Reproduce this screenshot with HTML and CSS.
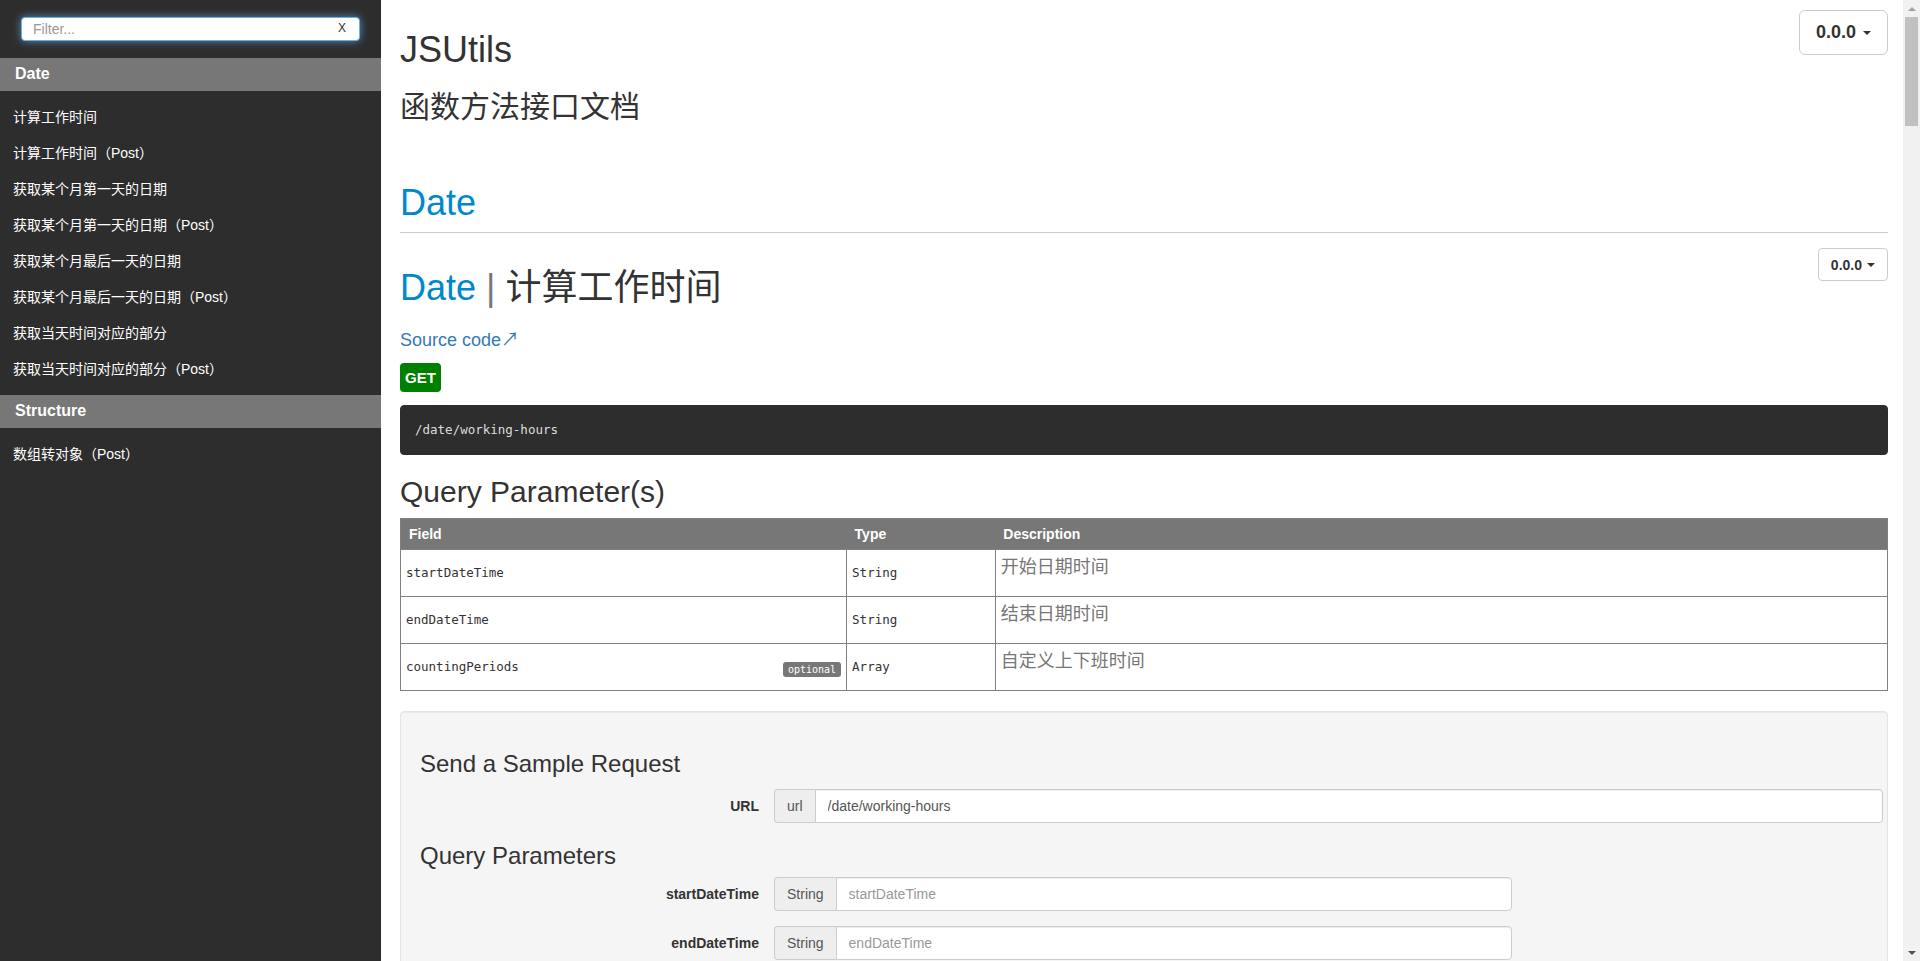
FILE: index.html
```html
<!DOCTYPE html>
<html lang="zh-CN">
<head>
<meta charset="utf-8">
<title>JSUtils</title>
<link rel="stylesheet" href="styles.css">
</head>
<body>
<div class="layout">
  <aside class="sidebar">
    <div class="filter-wrap">
      <div class="filter">
        <input type="text" placeholder="Filter...">
        <span class="filter-x">X</span>
      </div>
    </div>
    <nav>
      <div class="nav-header">Date</div>
      <ul class="nav-list">
        <li>计算工作时间</li>
        <li>计算工作时间（Post）</li>
        <li>获取某个月第一天的日期</li>
        <li>获取某个月第一天的日期（Post）</li>
        <li>获取某个月最后一天的日期</li>
        <li>获取某个月最后一天的日期（Post）</li>
        <li>获取当天时间对应的部分</li>
        <li>获取当天时间对应的部分（Post）</li>
      </ul>
      <div class="nav-header">Structure</div>
      <ul class="nav-list">
        <li>数组转对象（Post）</li>
      </ul>
    </nav>
  </aside>

  <main class="main">
    <div class="page-head">
      <div class="page-titles">
        <h1 class="project-name">JSUtils</h1>
        <h2 class="project-desc">函数方法接口文档</h2>
      </div>
      <button class="version-btn version-big">0.0.0<span class="caret"></span></button>
    </div>

    <section id="api-Date" class="api-section">
      <h1 class="section-title">Date</h1>

      <article class="api-article">
        <div class="article-head">
          <h1 class="api-title"><span class="api-group">Date</span> <span class="api-sep">|</span> <span class="api-name">计算工作时间</span></h1>
          <button class="version-btn version-small">0.0.0<span class="caret caret-small"></span></button>
        </div>
        <a class="source-link">Source code↗</a>
        <div class="method-row"><span class="method method-get">GET</span></div>
        <pre class="endpoint-box"><code class="endpoint">/date/working-hours</code></pre>

        <h2 class="params-title">Query Parameter(s)</h2>
        <table class="params-table">
          <thead>
            <tr><th class="col-field">Field</th><th class="col-type">Type</th><th>Description</th></tr>
          </thead>
          <tbody>
            <tr>
              <td><div class="field-cell"><code>startDateTime</code></div></td>
              <td><code>String</code></td>
              <td><p class="desc">开始日期时间</p></td>
            </tr>
            <tr>
              <td><div class="field-cell"><code>endDateTime</code></div></td>
              <td><code>String</code></td>
              <td><p class="desc">结束日期时间</p></td>
            </tr>
            <tr>
              <td><div class="field-cell"><code>countingPeriods</code><span class="optional">optional</span></div></td>
              <td><code>Array</code></td>
              <td><p class="desc">自定义上下班时间</p></td>
            </tr>
          </tbody>
        </table>

        <div class="sample-panel">
          <h3 class="panel-h3 first">Send a Sample Request</h3>
          <div class="form-row">
            <label class="control-label">URL</label>
            <div class="input-group">
              <span class="addon">url</span>
              <input class="url-input" type="text" value="/date/working-hours">
            </div>
          </div>
          <h3 class="panel-h3">Query Parameters</h3>
          <div class="form-row">
            <label class="control-label">startDateTime</label>
            <div class="input-group narrow">
              <span class="addon">String</span>
              <input type="text" placeholder="startDateTime">
            </div>
          </div>
          <div class="form-row">
            <label class="control-label">endDateTime</label>
            <div class="input-group narrow">
              <span class="addon">String</span>
              <input type="text" placeholder="endDateTime">
            </div>
          </div>
        </div>
      </article>
    </section>
  </main>

  <div class="scroll-rail" aria-hidden="true">
    <div class="rail-btn"><span class="arrow-up"></span></div>
    <div class="rail-thumb"></div>
    <div class="rail-space"></div>
    <div class="rail-btn"><span class="arrow-down"></span></div>
  </div>
</div>
</body>
</html>
```

FILE: styles.css
```css
* { box-sizing: border-box; }

html, body {
  margin: 0;
  height: 100%;
}

body {
  font-family: "Liberation Sans", Arial, "Noto Sans CJK SC", sans-serif;
  font-size: 14px;
  line-height: 1.42857;
  color: #333;
  background: #fff;
  overflow: hidden;
}

.layout {
  display: flex;
  height: 100vh;
}

/* ---------- sidebar ---------- */
.sidebar {
  flex: 0 0 381px;
  background: #2d2d2d;
  color: #fff;
  overflow: hidden;
}

.filter-wrap {
  padding: 17px 0 17px 21px;
}

.filter {
  position: relative;
  width: 339px;
  height: 24px;
}

.filter input {
  display: block;
  width: 100%;
  height: 24px;
  border: 1px solid #66afe9;
  border-radius: 4px;
  box-shadow: 0 0 8px rgba(102, 175, 233, 0.75);
  padding: 0 11px;
  font: 14px "Liberation Sans", Arial, sans-serif;
  color: #555;
  outline: none;
  background: #fff;
}

.filter input::placeholder { color: #999; }

.filter-x {
  position: absolute;
  right: 14px;
  top: 4px;
  font-size: 12px;
  line-height: 14px;
  color: #333;
}

.nav-header {
  height: 33px;
  line-height: 32px;
  padding: 0 15px;
  background: #777;
  color: #fff;
  font-weight: bold;
  font-size: 16px;
}

.nav-list {
  list-style: none;
  margin: 0;
  padding: 8px 0;
}

.nav-list li {
  height: 36px;
  line-height: 36px;
  padding-left: 13px;
  font-size: 14px;
  color: #fff;
  white-space: nowrap;
}

/* ---------- main ---------- */
.main {
  flex: 1;
  min-width: 0;
  overflow: hidden;
  padding: 10px 15px 0 19px;
}

.page-head {
  display: flex;
  justify-content: space-between;
  align-items: flex-start;
}

.project-name {
  font-size: 36px;
  font-weight: normal;
  line-height: 1.1;
  margin: 20px 0 10px;
}

.project-desc {
  font-size: 30px;
  font-weight: normal;
  line-height: 1.1;
  margin: 20px 0 10px;
}

.version-btn {
  display: flex;
  align-items: center;
  background: #fff;
  border: 1px solid #ccc;
  color: #333;
  font-family: "Liberation Sans", Arial, sans-serif;
  font-weight: bold;
  cursor: pointer;
}

.version-big {
  margin-top: 0;
  height: 45px;
  padding: 0 16px;
  font-size: 18px;
  border-radius: 6px;
}

.version-small {
  margin-top: 15px;
  height: 33px;
  padding: 0 12px;
  font-size: 14px;
  border-radius: 4px;
}

.caret {
  display: inline-block;
  width: 0;
  height: 0;
  margin-left: 7px;
  border-top: 4px solid #333;
  border-left: 4px solid transparent;
  border-right: 4px solid transparent;
}

.caret-small { margin-left: 5px; }

.section-title {
  font-size: 36px;
  font-weight: normal;
  line-height: 1.1;
  color: #0088cc;
  margin: 50px 0 0;
  padding-bottom: 10px;
  border-bottom: 1px solid #ccc;
}

.article-head {
  display: flex;
  justify-content: space-between;
  align-items: flex-start;
}

.api-title {
  font-size: 36px;
  font-weight: normal;
  line-height: 1.1;
  margin: 35px 0 0;
  color: #333;
}

.api-group { color: #0088cc; }
.api-sep { color: #777; }

.source-link {
  display: block;
  margin-top: 20px;
  font-size: 18px;
  color: #337ab7;
  text-decoration: none;
}

.method-row {
  margin-top: 10px;
  line-height: 0;
}

.method {
  display: inline-block;
  padding: 5px 5px;
  border-radius: 4px;
  color: #fff;
  font-weight: bold;
  font-size: 15px;
  line-height: 19px;
}

.method-get { background: #008000; }

.endpoint-box {
  margin: 13px 0 0;
  padding: 15px 14px;
  background: #2d2d2d;
  border: 1px solid #2d2d2d;
  border-radius: 4px;
  color: #dcdcdc;
  font-family: "DejaVu Sans Mono", "Liberation Mono", monospace;
  font-size: 12.5px;
  line-height: 18px;
}

.params-title {
  font-size: 30px;
  font-weight: normal;
  line-height: 1.1;
  margin: 20px 0 10px;
}

/* ---------- table ---------- */
.params-table {
  width: 100%;
  border-collapse: collapse;
  border: 1px solid #808080;
}

.params-table th {
  background: #777;
  color: #fff;
  text-align: left;
  font-size: 14px;
  font-weight: bold;
  line-height: 20px;
  padding: 5px 8px;
}

.col-field { width: 30%; }
.col-type { width: 10%; }

.params-table td {
  border: 1px solid #808080;
  padding: 5px;
  vertical-align: middle;
  font-family: "DejaVu Sans Mono", "Liberation Mono", monospace;
  font-size: 12.5px;
  color: #333;
}

.field-cell {
  display: flex;
  justify-content: space-between;
  align-items: center;
}

.optional {
  display: inline-block;
  margin-top: 5px;
  background: #777;
  color: #fff;
  border-radius: 3px;
  padding: 1px 5px;
  font-size: 10px;
  line-height: 13px;
}

.desc {
  margin: 0 0 10px;
  font-family: "Liberation Sans", Arial, "Noto Sans CJK SC", sans-serif;
  font-size: 18px;
  line-height: 1.42857;
  color: #777;
}

/* ---------- sample request ---------- */
.sample-panel {
  margin-top: 20px;
  padding: 19px 4px 19px 0;
  background: #f5f5f5;
  border: 1px solid #e3e3e3;
  border-radius: 4px;
  box-shadow: inset 0 1px 1px rgba(0, 0, 0, 0.05);
}

.panel-h3 {
  font-size: 24px;
  font-weight: normal;
  line-height: 1.1;
  margin: 20px 0 8px 19px;
}

.panel-h3.first { margin-bottom: 12px; }

.form-row {
  display: grid;
  grid-template-columns: 358px 1fr;
  column-gap: 15px;
  margin-bottom: 15px;
}

.control-label {
  text-align: right;
  font-weight: bold;
  padding-top: 7px;
  line-height: 20px;
}

.input-group {
  display: flex;
  height: 34px;
}

.input-group.narrow { max-width: 738px; }

.addon {
  padding: 6px 12px;
  background: #eee;
  border: 1px solid #ccc;
  border-right: 0;
  border-radius: 4px 0 0 4px;
  color: #555;
  font-size: 14px;
  line-height: 20px;
}

.input-group input {
  flex: 1;
  min-width: 0;
  height: 34px;
  border: 1px solid #ccc;
  border-radius: 0 4px 4px 0;
  padding: 6px 12px;
  font: 14px "Liberation Sans", Arial, sans-serif;
  color: #555;
  background: #fff;
  box-shadow: inset 0 1px 1px rgba(0, 0, 0, 0.075);
  outline: none;
}

.input-group input::placeholder { color: #999; }

/* ---------- scrollbar look-alike ---------- */
.scroll-rail {
  flex: 0 0 17px;
  display: flex;
  flex-direction: column;
  background: #f1f1f1;
}

.rail-btn {
  flex: 0 0 17px;
  display: flex;
  align-items: center;
  justify-content: center;
}

.arrow-up, .arrow-down {
  width: 0;
  height: 0;
  border-left: 4px solid transparent;
  border-right: 4px solid transparent;
}

.arrow-up { border-bottom: 4px solid #a3a3a3; }
.arrow-down { border-top: 4px solid #505050; }

.rail-thumb {
  flex: 0 0 109px;
  margin: 0 2px;
  background: #c1c1c1;
}

.rail-space { flex: 1; }
```
